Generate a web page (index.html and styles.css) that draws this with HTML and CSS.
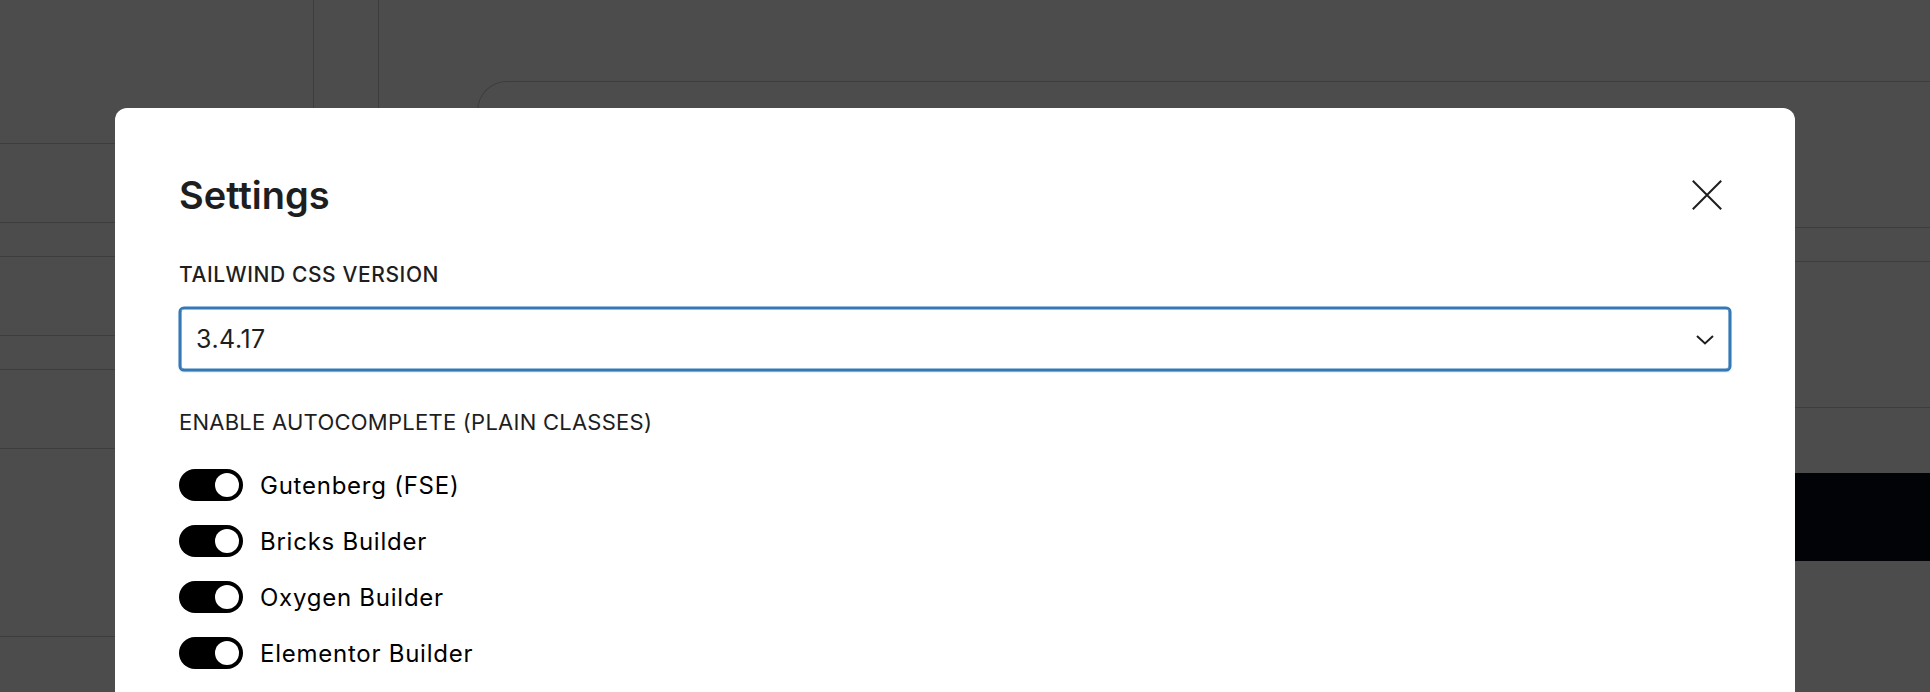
FILE: index.html
```html
<!DOCTYPE html>
<html lang="en">
<head>
    <meta charset="UTF-8">
    <title>Settings</title>
    <link rel="stylesheet" href="styles.css">
</head>
<body>
    <div class="page">
        <aside class="sidebar">
            <div class="side-row head"></div>
            <div class="side-row item"></div>
            <div class="side-row sub"></div>
            <div class="side-row item"></div>
            <div class="side-row sub"></div>
            <div class="side-row item"></div>
            <div class="side-row foot"></div>
        </aside>
        <div class="rail"></div>
        <main class="content">
            <div class="card">
                <div class="card-head"></div>
                <div class="card-tabs"></div>
                <div class="card-body"></div>
                <div class="card-bar"></div>
            </div>
        </main>
    </div>

    <div class="overlay"></div>

    <div class="modal" role="dialog" aria-labelledby="modal-title">
        <div class="modal-header">
            <h1 id="modal-title">Settings</h1>
            <button class="close" type="button" aria-label="Close">
                <svg width="48" height="48" viewBox="0 0 48 48" fill="none" stroke="currentColor" stroke-width="2">
                    <path d="M9.8 9.8 L38.2 38.2 M38.2 9.8 L9.8 38.2"/>
                </svg>
            </button>
        </div>

        <label class="field-label" for="tw-version">Tailwind CSS version</label>
        <div class="select-wrap">
            <select id="tw-version">
                <option>3.4.17</option>
            </select>
            <svg class="chevron" width="24" height="24" viewBox="0 0 24 24" fill="none" stroke="currentColor" stroke-width="2">
                <path d="M4 9 L12 16.5 L20 9"/>
            </svg>
        </div>

        <p class="group-label">Enable autocomplete (plain classes)</p>
        <ul class="toggles">
            <li><span class="toggle" role="switch" aria-checked="true"></span>Gutenberg (FSE)</li>
            <li><span class="toggle" role="switch" aria-checked="true"></span>Bricks Builder</li>
            <li><span class="toggle" role="switch" aria-checked="true"></span>Oxygen Builder</li>
            <li><span class="toggle" role="switch" aria-checked="true"></span>Elementor Builder</li>
        </ul>
    </div>
</body>
</html>
```

FILE: styles.css
```css
* {
    box-sizing: border-box;
}
html, body {
    margin: 0;
    height: 100%;
    overflow: hidden;
}
body {
    font-family: Inter, "Liberation Sans", sans-serif;
    background-color: #fff;
    color: #1e1e1e;
}

/* page behind the dialog */
.page {
    display: flex;
    height: 692px;
}
.sidebar {
    width: 314px;
    flex-shrink: 0;
    border-right: 1px solid #ccc;
}
.side-row {
    border-bottom: 1px solid #ccc;
}
.side-row.head {
    height: 144px;
}
.side-row.item {
    height: 79px;
}
.side-row.sub {
    height: 34px;
}
.side-row.foot {
    height: 188px;
}
.rail {
    width: 65px;
    flex-shrink: 0;
    border-right: 1px solid #ccc;
}
.content {
    flex: 1;
    padding: 81px 0 0 98px;
}
.card {
    border: 1px solid #ccc;
    border-right: none;
    border-bottom: none;
    border-radius: 30px 0 0 0;
    height: 100%;
}
.card-head {
    height: 146px;
    border-bottom: 1px solid #ccc;
}
.card-tabs {
    height: 34px;
    border-bottom: 1px solid #ccc;
}
.card-body {
    height: 146px;
    border-bottom: 1px solid #ccc;
}
.card-bar {
    height: 88px;
    margin-top: 65px;
    background-color: #070a17;
}

.overlay {
    position: fixed;
    inset: 0;
    background-color: rgba(0, 0, 0, 0.7);
}

/* dialog */
.modal {
    position: absolute;
    left: 115px;
    top: 108px;
    width: 1680px;
    height: 640px;
    padding: 63px 64px 0 64px;
    background-color: #fff;
    border-radius: 12px;
}
.modal-header {
    display: flex;
    align-items: center;
    justify-content: space-between;
    height: 48px;
}
.modal-header h1 {
    margin: 0;
    font-size: 38px;
    line-height: 46px;
    font-weight: 600;
    color: #1e1e1e;
}
.close {
    width: 48px;
    height: 48px;
    padding: 0;
    border: none;
    background: none;
    color: #1e1e1e;
    cursor: pointer;
}
.close svg {
    display: block;
}

.field-label,
.group-label {
    display: block;
    margin: 0;
    line-height: 28px;
    text-transform: uppercase;
    color: #1e1e1e;
}
.field-label {
    margin-top: 42px;
    font-size: 21px;
    font-weight: 500;
    letter-spacing: 0.6px;
}
.group-label {
    margin-top: 37px;
    font-size: 22px;
    font-weight: 400;
    letter-spacing: 0.25px;
}

.select-wrap {
    position: relative;
    margin-top: 18px;
}
.select-wrap select {
    display: block;
    width: 100%;
    height: 64px;
    padding: 0 48px 0 15px;
    font-family: inherit;
    font-size: 25px;
    letter-spacing: 0.5px;
    color: #1e1e1e;
    background-color: #fff;
    border: 2px solid #3478b6;
    border-radius: 5px;
    box-shadow: inset 0 0 0 0.6px #3478b6, 0 0 0 0.5px #3478b6, 0 1px 2px rgba(52, 120, 182, 0.35);
    appearance: none;
    outline: none;
}
.chevron {
    position: absolute;
    right: 14px;
    top: 20px;
    color: #1e1e1e;
    pointer-events: none;
}

.toggles {
    list-style: none;
    margin: 33px 0 0 0;
    padding: 0;
    display: flex;
    flex-direction: column;
    gap: 24px;
}
.toggles li {
    display: flex;
    align-items: center;
    gap: 17px;
    height: 32px;
    font-size: 24px;
    letter-spacing: 0.75px;
    color: #000;
}
.toggle {
    display: inline-flex;
    align-items: center;
    justify-content: flex-end;
    width: 64px;
    height: 32px;
    padding: 0 4px;
    border-radius: 16px;
    background-color: #000;
}
.toggle::after {
    content: "";
    width: 24px;
    height: 24px;
    border-radius: 50%;
    background-color: #fff;
}
```
